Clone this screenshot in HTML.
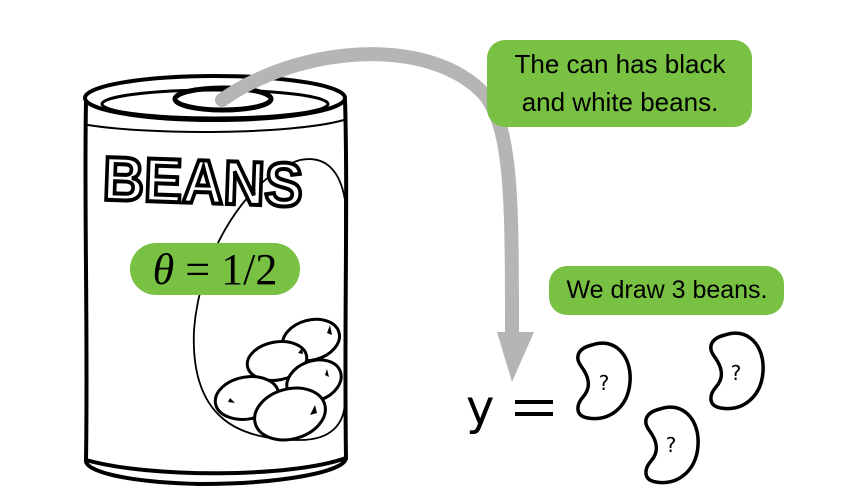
<!DOCTYPE html>
<html><head><meta charset="utf-8"><style>
html,body{margin:0;padding:0;background:#fff;width:864px;height:502px;overflow:hidden}
svg{display:block}
</style></head><body>
<svg width="864" height="502" viewBox="0 0 864 502" xmlns="http://www.w3.org/2000/svg">
<defs>
<path id="bean" d="M20,5 C42,-3 60,15 58,42 C56,68 36,82 16,78 C3,76 4,65 11,57 C19,48 18,38 9,26 C2,16 7,8 20,5 Z" fill="#fff" stroke="#000" stroke-width="3.5"/>
</defs>
<g fill="none" stroke="#000" stroke-linecap="round">
<path d="M86,102 C84,200 88,330 86,460 C150,478 290,478 346,458 C344,330 348,200 345,100" stroke-width="4" fill="#fff"/>
<path d="M86,460 C84,470 120,482 200,484 C280,484 345,472 346,458" stroke-width="4"/>
<ellipse cx="215" cy="98" rx="130" ry="22" stroke-width="4" fill="#fff"/>
<ellipse cx="215" cy="104" rx="113" ry="14" stroke-width="3"/>
<ellipse cx="223" cy="99" rx="48" ry="11" stroke-width="5"/>
<path d="M88,125 C150,135 290,135 344,120" stroke-width="2"/>
<path d="M300,160 C250,175 200,250 194,330 C190,420 240,440 300,440 C330,440 345,425 345,400 L345,200 C340,170 325,155 300,160 Z" stroke-width="1.8"/>
<g stroke-width="3" fill="#fff">
<ellipse cx="311" cy="340" rx="29" ry="20" transform="rotate(-15 311 340)"/>
<ellipse cx="277" cy="361" rx="30" ry="19" transform="rotate(-10 277 361)"/>
<ellipse cx="314" cy="381" rx="28" ry="20" transform="rotate(-20 314 381)"/>
<ellipse cx="247" cy="398" rx="32" ry="21" transform="rotate(-10 247 398)"/>
<ellipse cx="290" cy="414" rx="36" ry="25" transform="rotate(-15 290 414)"/>
</g>
<g fill="#000" stroke="none">
<path d="M327,333 l3,-8 l2,10 z"/><path d="M298,353 l4,-5 l1,6 z"/><path d="M325,375 l2,-6 l2,8 z"/><path d="M230,398 l5,5 l-7,-1 z"/><path d="M310,415 l5,-10 l2,8 z"/>
</g>
</g>
<text x="103" y="203" font-family="Liberation Sans, sans-serif" font-weight="bold" font-size="62" fill="#fff" stroke="#000" stroke-width="4" textLength="200" lengthAdjust="spacingAndGlyphs" transform="rotate(2 200 180)">BEANS</text>
<rect x="130" y="243" width="170" height="52" rx="26" fill="#78c143"/>
<text x="215" y="284" text-anchor="middle" font-family="Liberation Serif, serif" font-size="44" fill="#000"><tspan font-style="italic">θ</tspan> = 1/2</text>
<path d="M222,100 C300,45 430,35 485,95 C512,130 512,200 512,335" fill="none" stroke="#b5b5b5" stroke-width="14" stroke-linecap="round"/>
<path d="M497,332 L534,332 L512,382 Z" fill="#b5b5b5"/>
<rect x="487" y="40" width="265" height="87" rx="18" fill="#78c143"/>
<text font-family="Liberation Sans, sans-serif" font-size="26" fill="#000" text-anchor="middle"><tspan x="620" y="73">The can has black</tspan><tspan x="620" y="111">and white beans.</tspan></text>
<rect x="549" y="266" width="235" height="49" rx="18" fill="#78c143"/>
<text x="667" y="298" font-family="Liberation Sans, sans-serif" font-size="25" fill="#000" text-anchor="middle">We draw 3 beans.</text>
<text x="466" y="424" font-family="DejaVu Sans, sans-serif" font-size="48" fill="#000">y</text>
<rect x="515" y="400" width="38" height="4" fill="#000"/>
<rect x="515" y="412" width="38" height="4" fill="#000"/>
<use href="#bean" x="572" y="340"/>
<use href="#bean" x="640" y="404"/>
<use href="#bean" x="705" y="330"/>
<g font-family="DejaVu Sans, sans-serif" font-size="20" fill="#000" text-anchor="middle">
<text x="604" y="390">?</text><text x="671" y="452">?</text><text x="736" y="380">?</text>
</g>
</svg>
</body></html>
